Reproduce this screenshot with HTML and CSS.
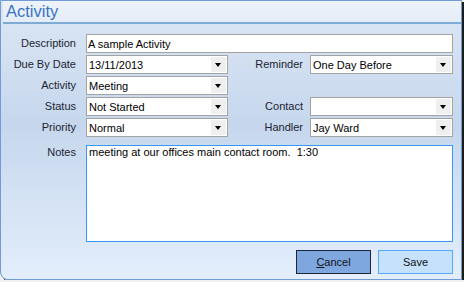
FILE: index.html
```html
<!DOCTYPE html>
<html lang="en">

<head>
    <meta charset="UTF-8">
    <title>Activity</title>
    <link rel="stylesheet" href="styles.css">
</head>

<body>
    <div class="window">
        <div class="title">Activity</div>

        <div class="form">
            <label class="label">Description</label>
            <input class="field wide" type="text" value="A sample Activity">

            <label class="label">Due By Date</label>
            <div class="combo"><span>13/11/2013</span><span class="arrow"></span></div>
            <label class="label right">Reminder</label>
            <div class="combo"><span>One Day Before</span><span class="arrow"></span></div>

            <label class="label">Activity</label>
            <div class="combo"><span>Meeting</span><span class="arrow"></span></div>
            <div></div>
            <div></div>

            <label class="label">Status</label>
            <div class="combo"><span>Not Started</span><span class="arrow"></span></div>
            <label class="label right">Contact</label>
            <div class="combo"><span></span><span class="arrow"></span></div>

            <label class="label">Priority</label>
            <div class="combo"><span>Normal</span><span class="arrow"></span></div>
            <label class="label right">Handler</label>
            <div class="combo"><span>Jay Ward</span><span class="arrow"></span></div>

            <label class="label notes-label">Notes</label>
            <textarea class="notes">meeting at our offices main contact room.  1:30</textarea>
        </div>

        <div class="buttons">
            <button class="btn cancel"><u>C</u>ancel</button>
            <button class="btn save">Save</button>
        </div>
    </div>
</body>

</html>
```

FILE: styles.css
```css
body {
    margin: 0;
    background-color: #f0f0f0;
    font-family: 'Liberation Sans', Arial, sans-serif;
    font-size: 11px;
}

.window {
    width: 462px;
    height: 280px;
    box-sizing: border-box;
    border: 1px solid #6f9bd6;
    border-radius: 0 0 0 8px;
    box-shadow: 2px 2px 0 #1c1c1c;
    background: linear-gradient(to bottom, #dce7f4 0%, #c6d7ed 45%, #e3eefc 100%);
    display: flex;
    flex-direction: column;
}

.title {
    height: 21px;
    padding-left: 3px;
    font-size: 16.5px;
    line-height: 21px;
    color: #3a74c0;
    background: linear-gradient(to bottom, #eef3fa, #e4ecf7);
    border-bottom: 2px solid #7eaad6;
    margin: 0 0 0 2px;
}

.form {
    display: grid;
    grid-template-columns: 85px 142px 82px 143px;
    grid-template-rows: repeat(5, 19px) 103px;
    row-gap: 2px;
    padding-top: 10px;
}

.label {
    display: flex;
    align-items: center;
    justify-content: flex-end;
    color: #1c2433;
    padding-right: 10px;
    padding-bottom: 1px;
    white-space: nowrap;
}

.label.right {
    padding-right: 7px;
}

.field,
.combo {
    box-sizing: border-box;
    height: 19px;
    border: 1px solid #a3a3a3;
    background-color: #fff;
    font-family: inherit;
    font-size: 11px;
    color: #000;
    margin: 0;
    padding: 0 1px;
}

.wide {
    grid-column: 2 / 5;
    outline: none;
}

.combo {
    display: flex;
    align-items: center;
    justify-content: space-between;
    padding-right: 1px;
}

.combo span:first-child {
    padding-left: 1px;
}

.arrow {
    width: 15px;
    height: 15px;
    background-color: #efefef;
    position: relative;
}

.arrow::after {
    content: "";
    position: absolute;
    left: 4px;
    top: 6px;
    border-left: 3.5px solid transparent;
    border-right: 3.5px solid transparent;
    border-top: 4px solid #000;
}

.notes-label {
    align-items: flex-start;
    margin-top: 6px;
    padding-top: 1px;
}

.notes {
    grid-column: 2 / 5;
    margin-top: 6px;
    height: 97px;
    box-sizing: border-box;
    border: 1px solid #3399ff;
    resize: none;
    outline: none;
    font-family: inherit;
    font-size: 11px;
    color: #000;
    padding: 0 2px;
    overflow: hidden;
}

.buttons {
    display: flex;
    justify-content: flex-end;
    gap: 7px;
    padding-right: 8px;
    margin-top: 8px;
}

.btn {
    width: 75px;
    height: 24px;
    box-sizing: border-box;
    font-family: inherit;
    font-size: 11px;
    color: #111;
    padding: 0;
}

.cancel {
    background-color: #7ea7e0;
    border: 1px solid #1b2535;
}

.save {
    background-color: #c5e1fc;
    border: 1px solid #55aaff;
}
```
